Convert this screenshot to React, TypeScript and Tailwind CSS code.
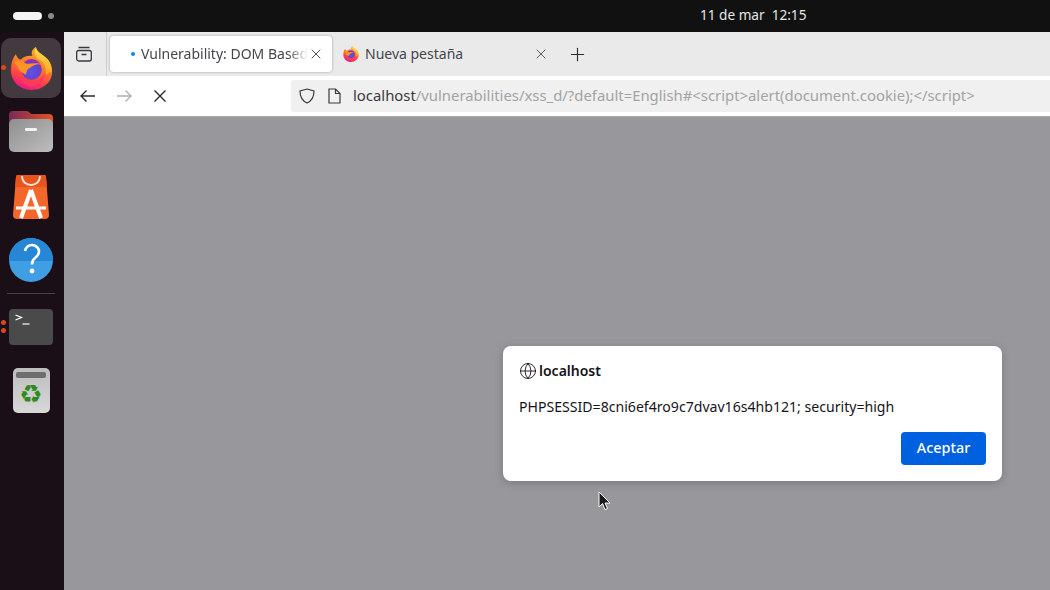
import { X, Plus, Globe } from "lucide-react";

const uiFont = "font-['Noto_Sans',sans-serif]";

function FirefoxLogo({ size, id }: { size: number; id: string }) {
  return (
    <svg width={size} height={size} viewBox="0 0 48 48">
      <defs>
        <linearGradient id={`${id}-body`} x1="0.7" y1="0" x2="0.35" y2="1">
          <stop offset="0" stopColor="#ffb52e" />
          <stop offset="0.45" stopColor="#ff7a2a" />
          <stop offset="0.75" stopColor="#ff3f4a" />
          <stop offset="1" stopColor="#e9168c" />
        </linearGradient>
        <linearGradient id={`${id}-flame`} x1="0.5" y1="0" x2="0.5" y2="1">
          <stop offset="0" stopColor="#ffe04a" />
          <stop offset="1" stopColor="#ffa51f" />
        </linearGradient>
        <radialGradient id={`${id}-globe`} cx="0.5" cy="0.65" r="0.65">
          <stop offset="0" stopColor="#5a55e4" />
          <stop offset="0.65" stopColor="#6640cc" />
          <stop offset="1" stopColor="#9a2bb0" />
        </radialGradient>
      </defs>
      <path
        d="M6.5 8C8 12 10 14 12 14C15 11 20 9 25 10C23 6 25 2 29 0C28 5 33 7 38 11C44 16 47 22 47 28C47 40 36 48 24 48C11 48 1 38 1 26C1 18 3 12 6.5 8Z"
        fill={`url(#${id}-body)`}
      />
      <path
        d="M29 0C27 5 27 9 31 13C38 16 41 22 40 31C44 28 46 27 47 28C47 20 44 14 38 10C34 7 30 5 29 0Z"
        fill={`url(#${id}-flame)`}
      />
      <circle cx="24" cy="25" r="11.5" fill={`url(#${id}-globe)`} />
      <path d="M4 17C9 14 14 15 17 18C22 20 29 16 36 20C31 18 26 20 23 23C20 24 18 27 18 31C13 29 9 25 8 21C7 19 5 18 4 17Z" fill="#ff9426" />
      <path d="M11 30C13 36 18 39 24 39C31 39 37 35 39 28C39 38 32 44 24 44C17 44 12 38 11 30Z" fill="#ff3a5e" />
    </svg>
  );
}

function DockDot({ className }: { className: string }) {
  return <span className={`absolute left-[1px] h-[5px] w-[5px] rounded-full bg-[#d94a1a] ${className}`} />;
}

function Dock() {
  return (
    <aside className="relative flex w-[64px] shrink-0 flex-col items-center bg-[#1b0f17] pr-[2px]">
      {/* Firefox */}
      <div className="mt-[6px] flex h-[60px] w-[60px] items-center justify-center rounded-[10px] bg-[#433a40]">
        <FirefoxLogo size={43} id="dock" />
      </div>
      <DockDot className="top-[33px]" />

      {/* Files */}
      <svg className="mt-[12px]" width="46" height="44" viewBox="0 0 46 44">
        <defs>
          <linearGradient id="folderTab" x1="0" y1="0" x2="1" y2="0">
            <stop offset="0" stopColor="#7a2a58" />
            <stop offset="1" stopColor="#e4521f" />
          </linearGradient>
          <linearGradient id="folderBody" x1="0" y1="0" x2="1" y2="1">
            <stop offset="0" stopColor="#8f8f8f" />
            <stop offset="1" stopColor="#bdbdbd" />
          </linearGradient>
        </defs>
        <path d="M1 5q0-4 4-4h13q2 0 3 1l2 2h18q4 0 4 4v10H1z" fill="url(#folderTab)" />
        <rect x="1" y="9" width="44" height="33" rx="5" fill="url(#folderBody)" />
        <rect x="17" y="18" width="12" height="3" rx="1.2" fill="#f2f2f2" />
      </svg>

      {/* App center */}
      <svg className="mt-[21px]" width="36" height="44" viewBox="0 0 36 44">
        <path d="M5 0h26q2 0 2 2l3 38q0 4-4 4H4q-4 0-4-4L3 2q0-2 2-2z" fill="#f4672a" />
        <path d="M5 0h26q2 0 2 2l1 10H2L3 2q0-2 2-2z" fill="#e9541c" />
        <path d="M9 1c0 12 18 12 18 0" fill="none" stroke="#fbe5d8" strokeWidth="1.8" />
        <path d="M18 15L8 43M18 15l10 28" stroke="#fff" strokeWidth="4" fill="none" />
        <path d="M3 33h30" stroke="#fff" strokeWidth="3" />
      </svg>

      {/* Help */}
      <svg className="mt-[18px]" width="46" height="46" viewBox="0 0 46 46">
        <defs>
          <clipPath id="helpClip">
            <circle cx="23" cy="23" r="22" />
          </clipPath>
        </defs>
        <circle cx="23" cy="23" r="22" fill="#3f9ee4" />
        <rect x="0" y="0" width="46" height="24" fill="#2587d6" clipPath="url(#helpClip)" />
        <path d="M17 14c1-4 4-6 7-6 4 0 7 3 7 6.500 0 3-2 4.500-3.500 6-2 1.500-3.500 3-3.500 7" fill="none" stroke="#fff" strokeWidth="2.6" />
        <circle cx="24" cy="34" r="2.4" fill="#fff" />
      </svg>

      <div className="mt-[10px] h-px w-[48px] bg-[#4a4046]" />

      {/* Terminal */}
      <div className="mt-[15px] h-[36px] w-[44px] rounded-[4px] bg-[#4a4a4a] pl-[6px] pt-[5px]">
        <svg width="16" height="14" viewBox="0 0 16 14">
          <path d="M0.5 1L6.5 3.500L0.5 6" fill="none" stroke="#fff" strokeWidth="1.2" />
          <path d="M7.5 10h7" stroke="#fff" strokeWidth="1.2" />
        </svg>
      </div>
      <DockDot className="top-[288px]" />
      <DockDot className="top-[296px]" />

      {/* Trash */}
      <div className="mt-[23px] flex h-[45px] w-[37px] flex-col items-center rounded-[5px] bg-gradient-to-b from-[#bdbdbd] to-[#d8d8d8] pt-[4px]">
        <div className="h-[6px] w-[30px] rounded-[2px] bg-[#6e6e6e]" />
        <span className="mt-[2px] text-[26px] leading-[28px] text-[#2e8b22] font-['DejaVu_Sans',sans-serif]">♻</span>
      </div>
    </aside>
  );
}

function TabBar() {
  return (
    <div className="flex h-[44px] items-center bg-[#eaeaea]">
      <div className="flex h-full w-[43px] shrink-0 items-center border-r border-[#cfcfcf] pl-[12px]">
        <svg width="16" height="16" viewBox="0 0 16 16" fill="none" stroke="#3a3a3e" strokeWidth="1.3">
          <rect x="0.7" y="4.5" width="14.6" height="10.5" rx="2" />
          <path d="M2.500 1.500h11M5.500 8.500h5" />
        </svg>
      </div>
      <div className="ml-[3px] flex h-[36px] w-[222px] items-center rounded-[4px] bg-white pl-[21px] pr-[8px] shadow-[0_0_3px_rgba(0,0,0,0.3)]">
        <span className="h-[4px] w-[4px] shrink-0 rounded-full bg-[#0a84ff]" />
        <span className="ml-[6px] mb-[1px] whitespace-nowrap text-[14px] text-[#45454c] [mask-image:linear-gradient(to_right,black_88%,transparent)]">
          Vulnerability: DOM Based
        </span>
        <X size={16} strokeWidth={1.3} className="ml-auto shrink-0 text-[#3a3a3e]" />
      </div>
      <div className="ml-[11px] flex w-[206px] items-center">
        <FirefoxLogo size={16} id="tab" />
        <span className="ml-[6px] mb-[1px] text-[14px] text-[#45454c]">Nueva pestaña</span>
        <X size={16} strokeWidth={1.3} className="ml-auto text-[#45454c]" />
      </div>
      <Plus size={21} strokeWidth={1.3} className="ml-[18px] text-[#2b2b2f]" />
    </div>
  );
}

function Toolbar() {
  return (
    <div className="flex h-[41px] items-center border-b border-[#a9a9ad] bg-white">
      <svg className="ml-[16px]" width="16" height="14" viewBox="0 0 16 14" fill="none" stroke="#2b2b2f" strokeWidth="1.4">
        <path d="M15 7H1.500M6.500 1.500L1 7l5.500 5.500" />
      </svg>
      <svg className="ml-[20px]" width="16" height="14" viewBox="0 0 16 14" fill="none" stroke="#b0b0b3" strokeWidth="1.4">
        <path d="M1 7h13.500M9.500 1.500L15 7l-5.500 5.500" />
      </svg>
      <svg className="ml-[21px]" width="14" height="14" viewBox="0 0 14 14" fill="none" stroke="#2b2b2f" strokeWidth="1.4">
        <path d="M1.500 1.500l11 11M12.500 1.500l-11 11" />
      </svg>
      <div className="ml-[124px] flex h-[32px] flex-1 items-center rounded-l-[4px] bg-[#f0f0f0] pl-[8px]">
        <svg width="16" height="16" viewBox="0 0 16 16" fill="none" stroke="#3a3a3e" strokeWidth="1.2">
          <path d="M8 1L15 3c0 6-1.500 9.500-7 12C2.500 12.500 1 9 1 3z" />
        </svg>
        <svg className="ml-[12px]" width="14" height="16" viewBox="0 0 14 16" fill="none" stroke="#3a3a3e" strokeWidth="1.2">
          <path d="M2 1h6.500L13 5.500V15H2zM8.500 1v4.500H13" />
        </svg>
        <span className="ml-[12px] mb-[2px] whitespace-nowrap text-[14.87px] text-[#a3a3a6]">
          <span className="text-[#3a3a3e]">localhost</span>
          /vulnerabilities/xss_d/?default=English#&lt;script&gt;alert(document.cookie);&lt;/script&gt;
        </span>
      </div>
    </div>
  );
}

function AlertDialog() {
  return (
    <div className="flex h-[135px] w-[499px] flex-col rounded-[8px] bg-white px-[16px] pb-[16px] pt-[15px] shadow-[0_2px_10px_rgba(0,0,0,0.2)]">
      <div className="flex items-center gap-[2px] text-[#15141a]">
        <Globe size={18} strokeWidth={1.2} />
        <span className="text-[14px] font-semibold leading-[20px]">localhost</span>
      </div>
      <p className="mt-[16px] text-[14.1px] leading-[20px] text-[#15141a]">
        PHPSESSID=8cni6ef4ro9c7dvav16s4hb121; security=high
      </p>
      <button className="mt-auto flex h-[33px] w-[85px] items-center justify-center self-end rounded-[4px] bg-[#0061e0] pb-[2px] text-[14.4px] font-medium text-white">
        Aceptar
      </button>
    </div>
  );
}

export default function App() {
  return (
    <div className={`flex h-[590px] w-[1050px] flex-col overflow-hidden bg-[#111111] ${uiFont}`}>
      {/* Top bar */}
      <header className="flex h-[32px] shrink-0 items-center bg-[#111111]">
        <span className="ml-[13px] h-[8px] w-[29px] rounded-full bg-[#f4f4f4]" />
        <span className="ml-[6px] h-[6px] w-[6px] rounded-full bg-[#8a8a8a]" />
        <span className="ml-[646px] mb-[2px] whitespace-nowrap text-[13.6px] text-[#e6e6e6]">11 de mar&nbsp;&nbsp;12:15</span>
      </header>

      <div className="flex flex-1">
        <Dock />
        <main className="flex flex-1 flex-col">
          <TabBar />
          <Toolbar />
          <div className="relative flex-1 bg-[#98979c] pl-[439px] pt-[229px]">
            <AlertDialog />
            <svg className="absolute left-[534px] top-[374px]" width="13" height="20" viewBox="0 0 13 20">
              <path d="M1 1v15l3.500-3.500 2.500 6 2.500-1-2.500-5.500H12z" fill="#1a1a1a" stroke="#fff" strokeWidth="1" />
            </svg>
          </div>
        </main>
      </div>
    </div>
  );
}
